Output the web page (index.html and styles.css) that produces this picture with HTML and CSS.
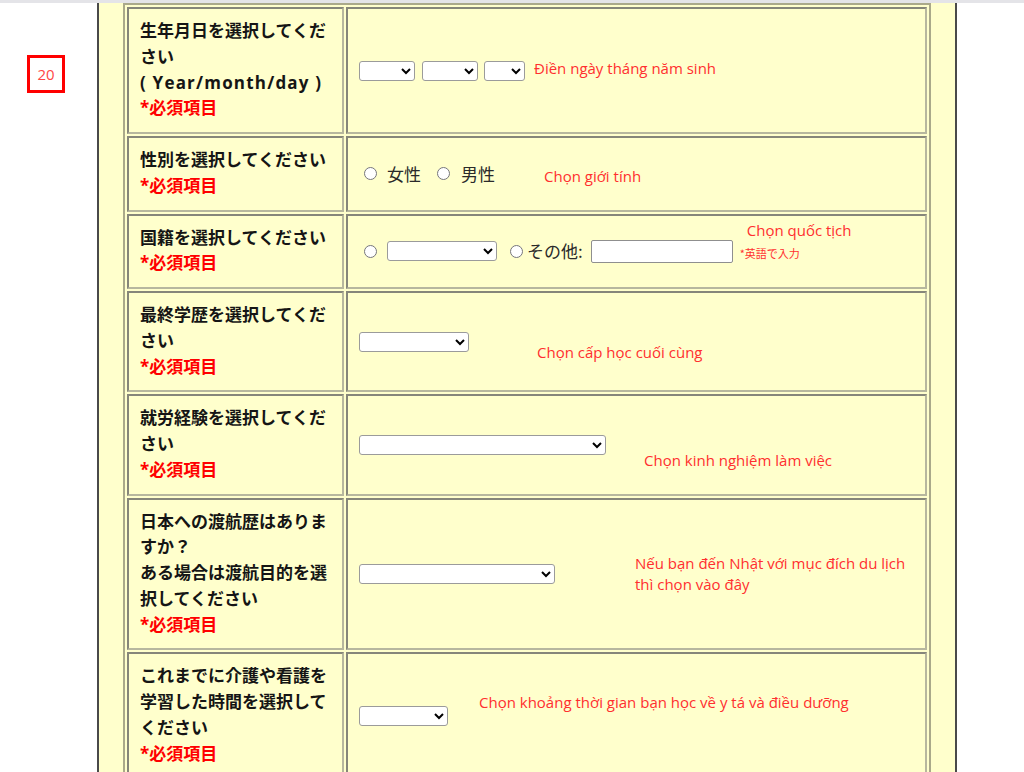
FILE: index.html
```html
<!DOCTYPE html>
<html lang="ja">
<head>
    <meta charset="UTF-8">
    <meta name="viewport" content="width=device-width, initial-scale=1.0">
    <title>応募フォーム</title>
    <link rel="stylesheet" href="styles.css">
</head>
<body>
    <div class="topbar"></div>
    <div class="page">
        <div class="gutter">
            <div class="badge">20</div>
        </div>

        <div class="sheet">
            <table class="form-table">
                <tr>
                    <td class="label">生年月日を選択してください<br><span class="label-en">( Year/month/day )</span><br><span class="req">*必須項目</span></td>
                    <td class="field">
                        <div class="field-row">
                            <select class="sel sel-year"><option></option></select>
                            <select class="sel sel-month"><option></option></select>
                            <select class="sel sel-day"><option></option></select>
                            <span class="memo memo-birth">Điền ngày tháng năm sinh</span>
                        </div>
                    </td>
                </tr>
                <tr>
                    <td class="label">性別を選択してください<br><span class="req">*必須項目</span></td>
                    <td class="field">
                        <div class="field-row">
                            <input type="radio" name="sex" class="radio">
                            <span class="opt opt-female">女性</span>
                            <input type="radio" name="sex" class="radio radio-male">
                            <span class="opt opt-male">男性</span>
                            <span class="memo memo-sex">Chọn giới tính</span>
                        </div>
                    </td>
                </tr>
                <tr>
                    <td class="label">国籍を選択してください<br><span class="req">*必須項目</span></td>
                    <td class="field">
                        <div class="field-row">
                            <input type="radio" name="nation" class="radio">
                            <select class="sel sel-nation"><option></option></select>
                            <input type="radio" name="nation" class="radio radio-other">
                            <span class="opt opt-other">その他:</span>
                            <input type="text" class="text-input">
                            <div class="nation-notes">
                                <span class="memo memo-nation">Chọn quốc tịch</span>
                                <span class="hint">*英語で入力</span>
                            </div>
                        </div>
                    </td>
                </tr>
                <tr>
                    <td class="label">最終学歴を選択してください<br><span class="req">*必須項目</span></td>
                    <td class="field">
                        <div class="field-row">
                            <select class="sel sel-school"><option></option></select>
                            <span class="memo memo-school">Chọn cấp học cuối cùng</span>
                        </div>
                    </td>
                </tr>
                <tr>
                    <td class="label">就労経験を選択してください<br><span class="req">*必須項目</span></td>
                    <td class="field">
                        <div class="field-row">
                            <select class="sel sel-work"><option></option></select>
                            <span class="memo memo-work">Chọn kinh nghiệm làm việc</span>
                        </div>
                    </td>
                </tr>
                <tr>
                    <td class="label">日本への渡航歴はありますか？<br>ある場合は渡航目的を選択してください<br><span class="req">*必須項目</span></td>
                    <td class="field">
                        <div class="field-row">
                            <select class="sel sel-visit"><option></option></select>
                            <span class="memo memo-visit">Nếu bạn đến Nhật với mục đích du lịch<br>thì chọn vào đây</span>
                        </div>
                    </td>
                </tr>
                <tr>
                    <td class="label">これまでに介護や看護を学習した時間を選択してください<br><span class="req">*必須項目</span></td>
                    <td class="field">
                        <div class="field-row">
                            <select class="sel sel-study"><option></option></select>
                            <span class="memo memo-study">Chọn khoảng thời gian bạn học về y tá và điều dưỡng</span>
                        </div>
                    </td>
                </tr>
            </table>
        </div>
    </div>
</body>
</html>
```

FILE: styles.css
```css
* {
    box-sizing: border-box;
}
body {
    margin: 0;
    background: #fff;
    color: #1e1e1e;
    font-family: "Noto Sans CJK JP", sans-serif;
    height: 772px;
    overflow: hidden;
}
.topbar {
    height: 3px;
    background: #e4e4e8;
}
.page {
    display: flex;
    height: 769px;
}
.gutter {
    width: 97px;
    flex-shrink: 0;
    padding: 52px 0 0 27px;
}
.badge {
    width: 38px;
    height: 38px;
    border: 3px solid #ff0000;
    color: #ff4646;
    font-family: "Open Sans", sans-serif;
    font-size: 15px;
    display: flex;
    align-items: center;
    justify-content: center;
}
.sheet {
    width: 860px;
    flex-shrink: 0;
    background: #ffffcc;
    border-left: 2px solid #4a4a4a;
    border-right: 2px solid #4a4a4a;
    padding: 0 24px;
}
.form-table {
    width: 808px;
    table-layout: fixed;
    border: 2px solid #aaa98a;
    border-spacing: 2px;
}
.form-table td {
    border: 2px solid;
    border-color: #86867a #b7b79e #b7b79e #86867a;
}
.label {
    width: 217px;
    padding: 9px 11px 11px 11px;
    font-family: "Open Sans", "Noto Sans CJK JP", sans-serif;
    font-size: 17px;
    font-weight: 700;
    line-height: 25.75px;
    color: #151515;
    vertical-align: middle;
}
.label-en {
    letter-spacing: 1.2px;
}
.req {
    color: #ff0000;
}
.field {
    padding: 0 11px;
    vertical-align: middle;
    font-size: 17px;
}
.field-row {
    display: flex;
    align-items: center;
}

/* form controls */
.sel {
    height: 20px;
    margin: 0;
    border: 1px solid #9b9b9b;
    border-radius: 3px;
    background: #fff;
    font-size: 13px;
}
.sel-year { width: 56px; }
.sel-month { width: 56px; margin-left: 7px; }
.sel-day { width: 41px; margin-left: 6px; }
.sel-nation { width: 110px; margin-left: 10px; }
.sel-school { width: 110px; }
.sel-work { width: 247px; }
.sel-visit { width: 196px; }
.sel-study { width: 89px; }

.radio {
    width: 13px;
    height: 13px;
    margin: 0 0 0 5px;
}
.radio-male { margin-left: 16px; }
.radio-other { margin-left: 13px; }
.opt {
    color: #2a2a2a;
    line-height: 24px;
}
.opt-female { margin-left: 10px; }
.opt-male { margin-left: 11px; }
.opt-other { margin-left: 4px; }
.text-input {
    width: 142px;
    height: 23px;
    margin: 0 0 0 8px;
    border: 1px solid #8f8f8f;
    border-radius: 2px;
    background: #fff;
}

/* red notes in vietnamese */
.memo {
    font-family: "Open Sans", sans-serif;
    font-size: 15px;
    line-height: 20px;
    color: #ff2f2f;
    white-space: nowrap;
}
.memo-birth { margin: 0 0 6px 9px; }
.memo-sex { margin: 4px 0 0 49px; }
.memo-school { margin: 20px 0 0 68px; }
.memo-work { margin: 31px 0 0 38px; }
.memo-visit { margin-left: 80px; line-height: 21px; }
.memo-study { margin: 0 0 28px 31px; }

.nation-notes {
    display: flex;
    flex-direction: column;
    margin-left: 7px;
    padding-bottom: 22px;
}
.memo-nation {
    margin-left: 7px;
}
.hint {
    margin-top: 6px;
    font-size: 11px;
    line-height: 14px;
    color: #ff2f2f;
}
```
